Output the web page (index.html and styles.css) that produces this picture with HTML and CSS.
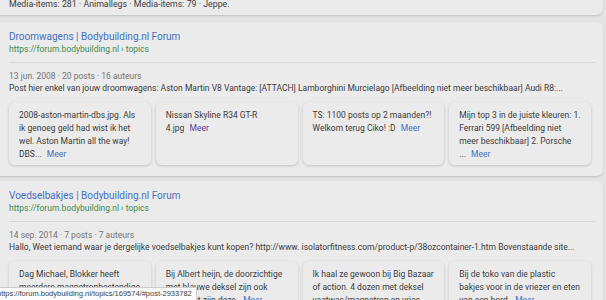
FILE: index.html
```html
<!DOCTYPE html>
<html lang="nl">
<head>
<meta charset="utf-8">
<title>Bodybuilding.nl Forum - zoekresultaten</title>
<link rel="stylesheet" href="styles.css">
</head>
<body>
<div class="results">
	<!-- vorige resultaat, alleen de onderkant zichtbaar -->
	<div class="result cut">
		<p class="snippet">Media-items: 281 · Animallegs · Media-items: 79 · Jeppe.</p>
	</div>

	<div class="result">
		<a class="title" href="#">Droomwagens | Bodybuilding.nl Forum</a>
		<div class="url">https://forum.bodybuilding.nl › topics</div>
		<hr class="line">
		<div class="meta">13 jun. 2008 · 20 posts · 16 auteurs</div>
		<p class="snippet">Post hier enkel van jouw droomwagens: Aston Martin V8 Vantage: [ATTACH] Lamborghini Murcielago [Afbeelding niet meer beschikbaar] Audi R8:...</p>
		<div class="posts">
			<div class="post">2008-aston-martin-dbs.jpg. Als ik genoeg geld had wist ik het wel. Aston Martin all the way! DBS... <a class="more" href="#">Meer</a></div>
			<div class="post">Nissan Skyline R34 GT-R<br>4.jpg <a class="more visited" href="#">Meer</a></div>
			<div class="post">TS: 1100 posts op 2 maanden?! Welkom terug Ciko! :D <a class="more" href="#">Meer</a></div>
			<div class="post">Mijn top 3 in de juiste kleuren: 1. Ferrari 599 [Afbeelding niet meer beschikbaar] 2. Porsche<br>... <a class="more" href="#">Meer</a></div>
		</div>
	</div>

	<div class="result">
		<a class="title" href="#">Voedselbakjes | Bodybuilding.nl Forum</a>
		<div class="url">https://forum.bodybuilding.nl › topics</div>
		<hr class="line">
		<div class="meta">14 sep. 2014 · 7 posts · 7 auteurs</div>
		<p class="snippet">Hallo, Weet iemand waar je dergelijke voedselbakjes kunt kopen? http://www. isolatorfitness.com/product-p/38ozcontainer-1.htm Bovenstaande site...</p>
		<div class="posts">
			<div class="post">Dag Michael, Blokker heeft meerdere magnetronbestendige bakjes in verschillende maten. <a class="more" href="#">Meer</a></div>
			<div class="post">Bij Albert heijn, de doorzichtige met blauwe deksel zijn ook goed, dat zijn deze. <a class="more" href="#">Meer</a></div>
			<div class="post">Ik haal ze gewoon bij Big Bazaar of action. 4 dozen met deksel vaatwas/magnetron en vries... <a class="more" href="#">Meer</a></div>
			<div class="post">Bij de toko van die plastic bakjes voor in de vriezer en eten van een bord. <a class="more" href="#">Meer</a></div>
		</div>
	</div>
</div>

<!-- link preview van de browser -->
<div class="status">https://forum.bodybuilding.nl/topics/169574/#post-2933782</div>
</body>
</html>
```

FILE: styles.css
```css
*{ margin:0; padding:0; box-sizing:border-box;}
body{ background:#e4e4e4; font:8.5px/12px Roboto,Arial,sans-serif; color:#3c3c3c; overflow:hidden;}
a{ text-decoration:none;}

.results{ margin-right:3px; display:flex; flex-direction:column; gap:5px;}
.result{ background:#ebebeb; border-radius:0 6px 6px 0; box-shadow:0 1px 2px rgba(0,0,0,.16); padding:7px 7px 11px 9px;}
.result.cut{ margin-top:-10px; padding:8px 9px 5px; margin-bottom:2px;}
.result.cut .snippet{ font-size:8.8px;}

.title{ display:block; color:#4470c0; font-size:10px; line-height:15px;}
.url{ color:#3d8a52; line-height:10px;}
.line{ border:0; border-top:1px solid #d8d8d8; margin:8px 0 7px;}
.meta{ color:#747474;}
.snippet{ white-space:nowrap; overflow:hidden;}

.posts{ display:grid; grid-template-columns:repeat(4,1fr); gap:5px; margin:8px 5px 0 0;}
.post{ background:#ebebeb; border-radius:6px; box-shadow:0 1px 3px rgba(0,0,0,.18); padding:7px 10px 0; height:63px; overflow:hidden; line-height:13px;}
.more{ color:#4470c0; margin-left:3px;}
.more.visited{ color:#5b3c9e;}

.status{ position:fixed; left:-3px; bottom:0; background:#fbfbfb; border:1px solid #cdcdcd; border-left:0; border-bottom:0; color:#444; font:7.5px/12px Arial,"Liberation Sans",sans-serif; padding:0 4px 0 0;}
```
